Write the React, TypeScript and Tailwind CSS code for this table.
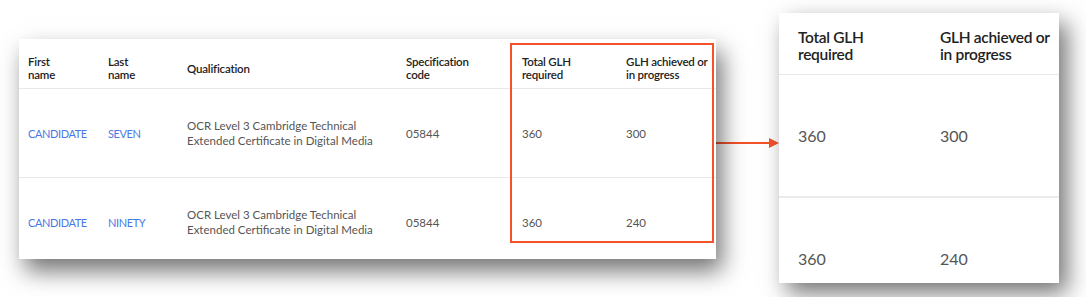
import React from 'react';

const rows = [
    { first: "CANDIDATE", last: "SEVEN", qual: ["OCR Level 3 Cambridge Technical", "Extended Certificate in Digital Media"], code: "05844", total: "360", achieved: "300" },
    { first: "CANDIDATE", last: "NINETY", qual: ["OCR Level 3 Cambridge Technical", "Extended Certificate in Digital Media"], code: "05844", total: "360", achieved: "240" },
];

const font = { fontFamily: "Lato, 'Noto Sans', sans-serif" };

const App = () => {
    return (
        <div className="w-[1086px] h-[297px] bg-white overflow-hidden flex items-start" style={font}>
            {/* main table */}
            <div className="relative mt-[39px] ml-[19px] w-[697px] h-[220px] bg-white overflow-hidden shrink-0 shadow-[6px_12px_22px_rgba(0,0,0,0.55)]">
                <div className="flex items-center h-[50px] pl-[9px] pt-[9px] border-b border-[#e8e8e8] text-[11.5px] leading-[13px] font-semibold tracking-[-0.2px] text-[#222] whitespace-nowrap">
                    <div className="w-[80px]">First<br />name</div>
                    <div className="w-[79px]">Last<br />name</div>
                    <div className="w-[219px]">Qualification</div>
                    <div className="w-[116px]">Specification<br />code</div>
                    <div className="w-[104px]">Total GLH<br />required</div>
                    <div>GLH achieved or<br />in progress</div>
                </div>
                {rows.map((r, i) => (
                    <div key={i} className="flex items-center h-[89px] pl-[9px] border-b border-[#e8e8e8] text-[11.5px] leading-[15px] text-[#555] whitespace-nowrap">
                        <div className="w-[80px] text-[11px] tracking-[-0.4px] text-[#4a78e8]">{r.first}</div>
                        <div className="w-[79px] text-[11px] tracking-[-0.4px] text-[#4a78e8]">{r.last}</div>
                        <div className="w-[219px]">{r.qual[0]}<br />{r.qual[1]}</div>
                        <div className="w-[116px]">{r.code}</div>
                        <div className="w-[104px]">{r.total}</div>
                        <div>{r.achieved}</div>
                    </div>
                ))}
                <div className="absolute left-[491px] top-[4px] w-[204px] h-[200px] border-2 border-[#f4522b]"></div>
            </div>

            {/* arrow */}
            <svg className="-ml-[3px] mt-[137px] shrink-0" width="66" height="12" viewBox="0 0 66 12">
                <line x1="0" y1="6" x2="58" y2="6" stroke="#f4522b" strokeWidth="2" />
                <polygon points="56,1 66,6 56,11" fill="#f4522b" />
            </svg>

            {/* zoomed view */}
            <div className="mt-[13px] w-[280px] h-[270px] bg-white overflow-hidden shrink-0 shadow-[8px_10px_22px_rgba(0,0,0,0.55)]">
                <div className="flex items-center h-[62px] pl-[19px] pt-[4px] border-b border-[#e8e8e8] text-[15.5px] leading-[17px] font-semibold tracking-[-0.3px] text-[#222] whitespace-nowrap">
                    <div className="w-[142px]">Total GLH<br />required</div>
                    <div>GLH achieved or<br />in progress</div>
                </div>
                {rows.map((r, i) => (
                    <div key={i} className="flex items-center h-[123px] pl-[19px] border-b-2 border-[#ebebeb] text-[16px] text-[#555] whitespace-nowrap">
                        <div className="w-[142px]">{r.total}</div>
                        <div>{r.achieved}</div>
                    </div>
                ))}
            </div>
        </div>
    );
};

export default App;
